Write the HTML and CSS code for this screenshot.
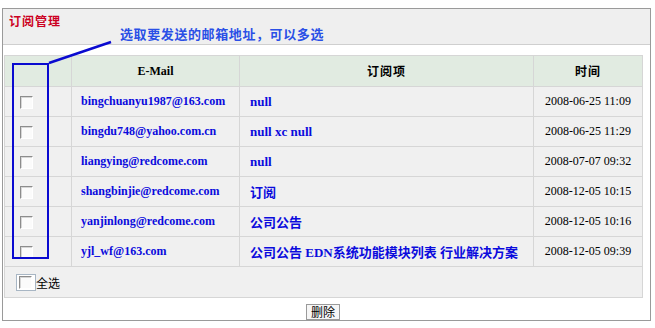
FILE: index.html
```html
<!DOCTYPE html>
<html lang="zh-CN">
<head>
    <meta charset="UTF-8">
    <title>订阅管理</title>
    <link rel="stylesheet" href="styles.css">
</head>
<body>
    <div class="panel">
        <div class="panel-head">订阅管理</div>
        <table class="sub-table">
            <colgroup>
                <col class="c-check">
                <col class="c-mail">
                <col class="c-item">
                <col class="c-time">
            </colgroup>
            <tr class="head-row">
                <th></th>
                <th>E-Mail</th>
                <th><span class="cn">订阅项</span></th>
                <th><span class="cn">时间</span></th>
            </tr>
            <tr>
                <td><span class="cb"></span></td>
                <td class="mail">bingchuanyu1987@163.com</td>
                <td class="item">null</td>
                <td class="time">2008-06-25 11:09</td>
            </tr>
            <tr>
                <td><span class="cb"></span></td>
                <td class="mail">bingdu748@yahoo.com.cn</td>
                <td class="item">null xc null</td>
                <td class="time">2008-06-25 11:29</td>
            </tr>
            <tr>
                <td><span class="cb"></span></td>
                <td class="mail">liangying@redcome.com</td>
                <td class="item">null</td>
                <td class="time">2008-07-07 09:32</td>
            </tr>
            <tr>
                <td><span class="cb"></span></td>
                <td class="mail">shangbinjie@redcome.com</td>
                <td class="item"><span class="cn">订阅</span></td>
                <td class="time">2008-12-05 10:15</td>
            </tr>
            <tr>
                <td><span class="cb"></span></td>
                <td class="mail">yanjinlong@redcome.com</td>
                <td class="item"><span class="cn">公司公告</span></td>
                <td class="time">2008-12-05 10:16</td>
            </tr>
            <tr>
                <td><span class="cb"></span></td>
                <td class="mail">yjl_wf@163.com</td>
                <td class="item"><span class="cn">公司公告</span> EDN<span class="cn">系统功能模块列表</span> <span class="cn">行业解决方案</span></td>
                <td class="time">2008-12-05 09:39</td>
            </tr>
            <tr class="all-row">
                <td colspan="4">
                    <span class="cb-focus"><span class="cb"></span></span><span class="all-label">全选</span>
                </td>
            </tr>
        </table>
        <div class="actions">
            <button class="btn">删除</button>
        </div>
    </div>

    <!-- callout drawn over the page -->
    <div class="callout">选取要发送的邮箱地址，可以多选</div>
    <svg class="callout-marks" width="655" height="328" viewBox="0 0 655 328">
        <line x1="49" y1="63" x2="111" y2="42" stroke="#0a0ad0" stroke-width="2.5"/>
        <rect x="13" y="64" width="35" height="194" fill="none" stroke="#0a0ad0" stroke-width="2"/>
    </svg>
</body>
</html>
```

FILE: styles.css
```css
body {
    margin: 0;
    background: #ffffff;
    font-family: "Liberation Serif", "Noto Sans CJK SC", serif;
    font-size: 12px;
    color: #000;
}

.panel {
    margin: 8px 0 0 2px;
    width: 647px;
    height: 311px;
    border: 1px solid #9a9a9a;
}

.panel-head {
    height: 30px;
    padding: 5px 0 0 6px;
    background: #efefef;
    border-bottom: 1px solid #cfcfcf;
    color: #cc0022;
    font-family: "Noto Sans CJK SC", sans-serif;
    font-weight: bold;
    font-size: 12px;
    letter-spacing: 1px;
    line-height: 14px;
}

.sub-table {
    margin: 10px 0 0 1px;
    width: 638px;
    border-collapse: collapse;
    background: #f0f0f0;
    table-layout: fixed;
}

.c-check { width: 67px; }
.c-mail { width: 168px; }
.c-item { width: 294px; }
.c-time { width: 109px; }

.sub-table th,
.sub-table td {
    border: 1px solid #d6d6d6;
    height: 29px;
    padding: 0;
    white-space: nowrap;
}

.sub-table th {
    background: #e1ebe1;
    font-weight: bold;
    text-align: center;
    height: 30px;
}

.cn {
    font-family: "Noto Sans CJK SC", sans-serif;
    letter-spacing: 1px;
}

.sub-table td:first-child {
    padding-left: 15px;
}

.cb {
    display: inline-block;
    vertical-align: middle;
    width: 11px;
    height: 11px;
    background: #fbfbfb;
    border: 1px solid;
    border-color: #8c8c8c #ffffff #ffffff #8c8c8c;
    box-shadow: inset 1px 1px #d6d6d6;
}

.mail {
    padding-left: 9px !important;
    color: #0b0bdd;
    font-weight: bold;
}

.item {
    padding-left: 10px !important;
    color: #0b0bdd;
    font-weight: bold;
    font-size: 13px;
}

.item .cn {
    letter-spacing: 0;
}

.time {
    text-align: center;
}

.all-row td {
    padding-left: 11px !important;
    height: 30px;
}

.cb-focus {
    display: inline-block;
    vertical-align: middle;
    padding: 1px 3px 1px 2px;
    background: #ffffff;
    border: 1px solid #a8b6c4;
}

.cb-focus .cb {
    display: block;
}

.all-label {
    vertical-align: middle;
    font-family: "Noto Sans CJK SC", sans-serif;
    font-size: 12px;
}

.actions {
    width: 638px;
    margin-left: 1px;
    padding-top: 6px;
    text-align: center;
}

.btn {
    height: 16px;
    padding: 0 4px;
    margin: 0;
    background: #f6f6f6;
    border: 1px solid #9a9a9a;
    font-family: "Noto Sans CJK SC", sans-serif;
    font-size: 12px;
    line-height: 12px;
    color: #000;
}

.callout {
    position: absolute;
    left: 120px;
    top: 26px;
    color: #2a4fe6;
    font-family: "Noto Sans CJK SC", sans-serif;
    font-weight: bold;
    font-size: 13px;
    letter-spacing: 0.6px;
    line-height: 16px;
}

.callout-marks {
    position: absolute;
    left: 0;
    top: 0;
    pointer-events: none;
}
```
